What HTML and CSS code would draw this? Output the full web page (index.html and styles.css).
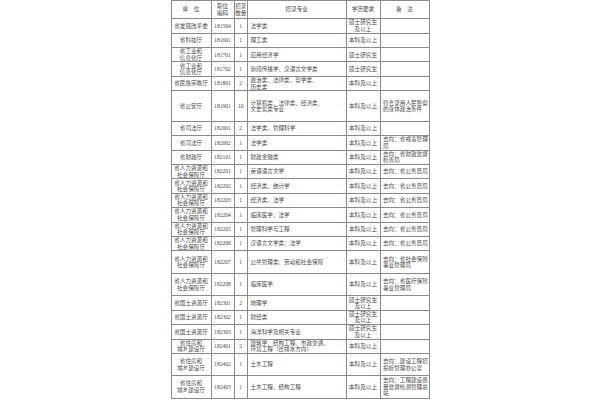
FILE: index.html
```html
<!DOCTYPE html>
<html lang="zh-CN">
<head>
<meta charset="utf-8">
<title>招录职位表</title>
<link rel="stylesheet" href="styles.css">
</head>
<body>
<table class="jobs">
  <colgroup>
    <col class="c-unit"><col class="c-code"><col class="c-num"><col class="c-major"><col class="c-edu"><col class="c-note">
  </colgroup>
  <thead>
    <tr class="head">
      <th>单　位</th><th>职位<br>编码</th><th>招录<br>数量</th><th>招录专业</th><th>学历要求</th><th>备　注</th>
    </tr>
  </thead>
  <tbody>
    <tr><td>省发展改革委</td><td>181504</td><td>1</td><td class="l">法学类</td><td>硕士研究生<br>及以上</td><td class="l"></td></tr>
    <tr><td>省科技厅</td><td>181601</td><td>1</td><td class="l">理工类</td><td>本科及以上</td><td class="l"></td></tr>
    <tr><td>省工业和<br>信息化厅</td><td>181701</td><td>1</td><td class="l">应用经济学</td><td>硕士研究生</td><td class="l"></td></tr>
    <tr><td>省工业和<br>信息化厅</td><td>181702</td><td>1</td><td class="l">新闻传播学、汉语言文学类</td><td>硕士研究生</td><td class="l"></td></tr>
    <tr><td>省民族宗教厅</td><td>181801</td><td>2</td><td class="l">政治类、法律类、哲学类、<br>历史类</td><td>本科及以上</td><td class="l"></td></tr>
    <tr class="h31"><td>省公安厅</td><td>181901</td><td>10</td><td class="l">计算机类、法律类、经济类、<br>文史哲类专业</td><td>本科及以上</td><td class="l">符合录用人民警察<br>的身体政治条件</td></tr>
    <tr><td>省司法厅</td><td>182001</td><td>2</td><td class="l">法学类、管理科学</td><td>本科及以上</td><td class="l"></td></tr>
    <tr><td>省司法厅</td><td>182002</td><td>1</td><td class="l">法学类</td><td>本科及以上</td><td class="l">去向：省戒毒管理<br>局</td></tr>
    <tr><td>省财政厅</td><td>182101</td><td>1</td><td class="l">财政金融类</td><td>本科及以上</td><td class="l">去向：省财政监督<br>检查局</td></tr>
    <tr><td>省人力资源和<br>社会保障厅</td><td>182201</td><td>1</td><td class="l">英语语言文学</td><td>本科及以上</td><td class="l">去向：省公务员局</td></tr>
    <tr><td>省人力资源和<br>社会保障厅</td><td>182202</td><td>1</td><td class="l">经济类、统计学</td><td>本科及以上</td><td class="l">去向：省公务员局</td></tr>
    <tr><td>省人力资源和<br>社会保障厅</td><td>182203</td><td>1</td><td class="l">经济类、法学</td><td>本科及以上</td><td class="l">去向：省公务员局</td></tr>
    <tr><td>省人力资源和<br>社会保障厅</td><td>182204</td><td>1</td><td class="l">临床医学、法学</td><td>本科及以上</td><td class="l">去向：省公务员局</td></tr>
    <tr><td>省人力资源和<br>社会保障厅</td><td>182205</td><td>1</td><td class="l">管理科学与工程</td><td>本科及以上</td><td class="l">去向：省公务员局</td></tr>
    <tr><td>省人力资源和<br>社会保障厅</td><td>182206</td><td>1</td><td class="l">汉语言文学类、法学</td><td>本科及以上</td><td class="l">去向：省公务员局</td></tr>
    <tr class="h22"><td>省人力资源和<br>社会保障厅</td><td>182207</td><td>1</td><td class="l">公共管理类、劳动和社会保障</td><td>本科及以上</td><td class="l">去向：省社会保险<br>事业管理局</td></tr>
    <tr class="h23"><td>省人力资源和<br>社会保障厅</td><td>182208</td><td>1</td><td class="l">临床医学</td><td>本科及以上</td><td class="l">去向：省医疗保险<br>事业管理局</td></tr>
    <tr><td>省国土资源厅</td><td>182301</td><td>2</td><td class="l">地理学</td><td>硕士研究生<br>及以上</td><td class="l"></td></tr>
    <tr><td>省国土资源厅</td><td>182302</td><td>1</td><td class="l">财经类</td><td>硕士研究生<br>及以上</td><td class="l"></td></tr>
    <tr><td>省国土资源厅</td><td>182303</td><td>1</td><td class="l">海洋科学及相关专业</td><td>硕士研究生<br>及以上</td><td class="l"></td></tr>
    <tr><td>省住房和<br>城乡建设厅</td><td>182401</td><td>2</td><td class="l">建筑学、结构工程、市政交通、<br>环境工程（给排水方向）</td><td>本科及以上</td><td class="l"></td></tr>
    <tr class="h22"><td>省住房和<br>城乡建设厅</td><td>182402</td><td>1</td><td class="l">土木工程</td><td>本科及以上</td><td class="l">去向：建设工程招<br>投标管理办公室</td></tr>
    <tr class="h22"><td>省住房和<br>城乡建设厅</td><td>182403</td><td>1</td><td class="l">土木工程、结构工程</td><td>本科及以上</td><td class="l">去向：工程建设质<br>量监督检测管理总<br>站</td></tr>
  </tbody>
</table>
</body>
</html>
```
FILE: styles.css
```css
html, body {
  margin: 0;
  padding: 0;
  background: #ffffff;
}
body {
  width: 600px;
  height: 400px;
  overflow: hidden;
}
.jobs {
  margin: 0 auto;
  width: 258px;
  table-layout: fixed;
  border-collapse: collapse;
  font-family: "Liberation Serif", "Noto Sans CJK SC", serif;
  font-size: 5.6px;
  line-height: 6.5px;
  color: #4a4a4a;
}
.c-unit { width: 40px; }
.c-code { width: 23px; }
.c-num { width: 13.5px; }
.c-major { width: 98.5px; }
.c-edu { width: 34px; }
.c-note { width: 49px; }
.jobs th, .jobs td {
  border: 1px solid #8a8a8a;
  padding: 0;
  text-align: center;
  vertical-align: middle;
  white-space: nowrap;
  overflow: hidden;
  font-weight: normal;
}
.jobs td.l {
  text-align: left;
  padding-left: 2.5px;
}
.jobs tr { height: 14.4px; }
.jobs tr.head { height: 18.3px; }
.jobs tr.h31 { height: 30.6px; }
.jobs tr.h22 { height: 22.3px; }
.jobs tr.h23 { height: 22.7px; }
```
